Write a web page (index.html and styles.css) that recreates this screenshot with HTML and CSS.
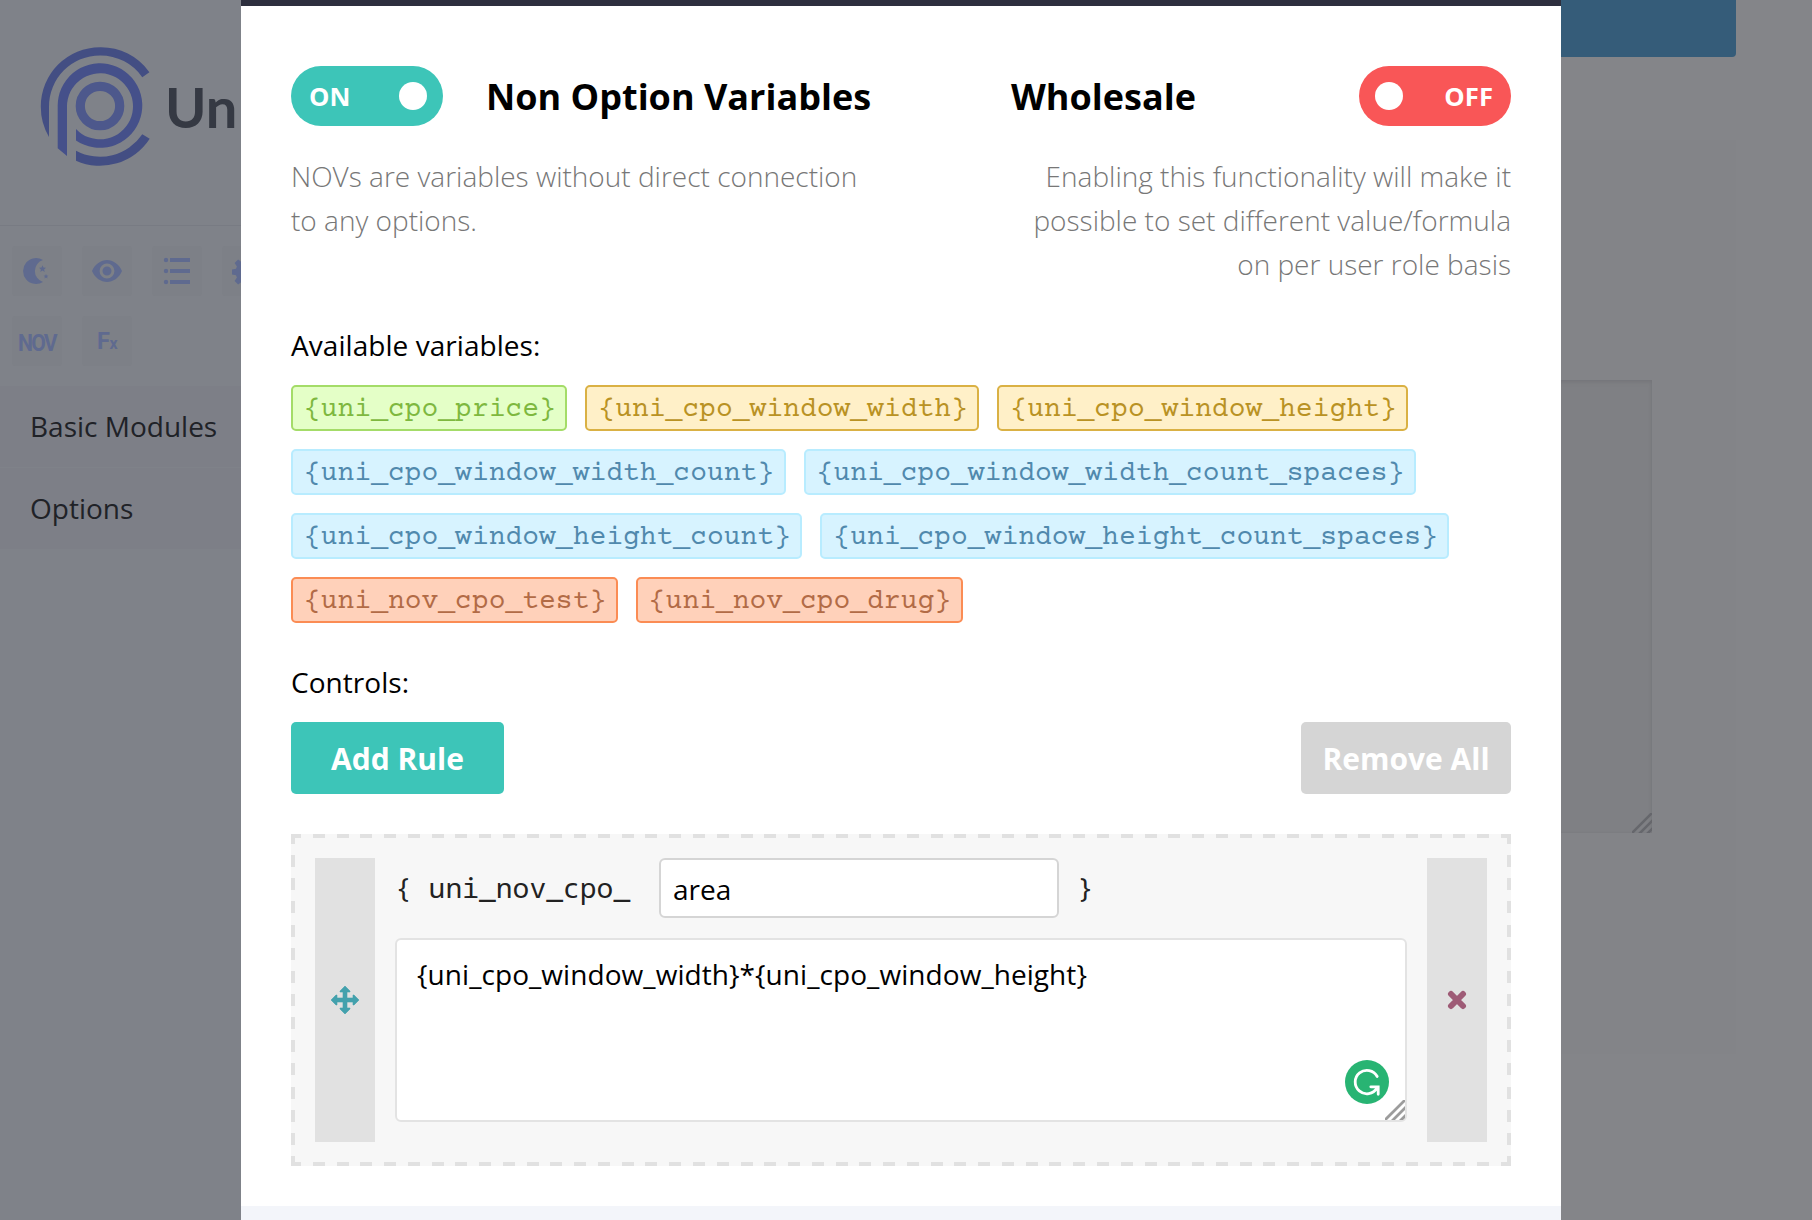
FILE: index.html
```html
<!DOCTYPE html>
<html lang="en">
<head>
<meta charset="utf-8">
<title>Non Option Variables</title>
<link rel="stylesheet" href="styles.css">
</head>
<body>
<div class="app">
  <aside class="sidebar">
    <div class="brand">
      <svg class="brand-mark" width="120" height="120" viewBox="40 46 120 120">
        <g fill="#45508a">
          <path fill="#434e83" d="M149.4 72.2A59.3 59.3 0 0 0 100 47.2A59.3 59.3 0 0 0 40.8 106.5A59.3 59.3 0 0 0 49 137V106.5A51 51 0 0 1 100 55.4A51 51 0 0 1 142.3 77.2Z"/>
          <path fill="#434e83" d="M76 150.7A51 51 0 0 0 142.3 134.2L149.7 138.8A59.2 59.2 0 0 1 76 160.7Z"/>
          <path d="M57.7 106.5V148.3L67 156V106.5A33 33 0 1 1 76 129V140.4A42.3 42.3 0 1 0 57.7 106.5Z"/>
        </g>
        <circle cx="100" cy="106" r="19.7" fill="none" stroke="#4d588c" stroke-width="9.2"/>
      </svg>
      <span class="brand-name">Un</span>
    </div>
    <div class="tools">
      <span class="tool"><svg width="30" height="30" viewBox="0 0 30 30"><path d="M21 4A13 13 0 1 0 21 26A11.5 11.5 0 0 1 21 4Z"/><path d="M20.5 9.2l1 2.3 2.500.2-1.900 1.700.6 2.500-2.200-1.300-2.200 1.300.6-2.500-1.900-1.700 2.500-.2zM24 18l.7 1.500 1.700.2-1.300 1.100.4 1.700-1.500-.9-1.500.9.4-1.700-1.300-1.100 1.700-.2z"/></svg></span>
      <span class="tool"><svg width="30" height="30" viewBox="0 0 30 30"><path fill-rule="evenodd" d="M0 15C3 8 9 4 15 4S27 8 30 15C27 22 21 26 15 26S3 22 0 15ZM15 7.600a7.400 7.400 0 1 0 0 14.800a7.400 7.400 0 1 0 0-14.800ZM15 10.500a4.500 4.500 0 1 1 0 9a4.500 4.500 0 1 1 0-9Z"/></svg></span>
      <span class="tool"><svg width="30" height="30" viewBox="0 0 30 30"><path d="M8 2H28V6H8ZM8 13H28V17H8ZM8 24H28V28H8Z"/><circle cx="4" cy="4" r="2.200"/><circle cx="4" cy="15" r="2.200"/><circle cx="4" cy="26" r="2.200"/></svg></span>
      <span class="tool"><svg width="30" height="30" viewBox="0 0 30 30"><path fill-rule="evenodd" d="M12.500 1h5l.8 4 2.200.9 3.400-2.300 3.500 3.500-2.300 3.400.9 2.200 4 .8v5l-4 .8-.9 2.200 2.300 3.400-3.500 3.500-3.400-2.300-2.200.9-.8 4h-5l-.8-4-2.200-.9-3.400 2.300-3.500-3.500 2.300-3.400-.9-2.200-4-.8v-5l4-.8.9-2.200-2.300-3.400 3.500-3.500 3.400 2.300 2.200-.9zM15 10a5 5 0 1 0 0 10a5 5 0 1 0 0-10Z"/></svg></span>
      <span class="tool"><b class="tool-nov">NOV</b></span>
      <span class="tool"><b class="tool-fx">F<small>x</small></b></span>
    </div>
    <nav class="sections">
      <div class="section">Basic Modules</div>
      <div class="section">Options</div>
    </nav>
  </aside>
  <main class="canvas">
    <div class="bar"></div>
    <div class="card">
      <div class="field"><svg class="field-grip" width="20" height="20" viewBox="0 0 20 20"><path d="M-1 21L21 -1M7 21L21 7M15 21L21 15"/></svg></div>
    </div>
  </main>
</div>

<div class="modal">
  <div class="modal-head"></div>
  <div class="modal-body">
    <div class="settings">
      <section class="setting">
        <div class="setting-top">
          <span class="toggle toggle-on">ON<i class="knob"></i></span>
          <h2>Non Option Variables</h2>
        </div>
        <p class="desc">NOVs are variables without direct connection to any options.</p>
      </section>
      <section class="setting setting-right">
        <div class="setting-top">
          <h2>Wholesale</h2>
          <span class="toggle toggle-off"><i class="knob"></i>OFF</span>
        </div>
        <p class="desc">Enabling this functionality will make it possible to set different value/formula on&nbsp;per user role basis</p>
      </section>
    </div>

    <div class="label">Available variables:</div>
    <div class="tags">
      <div class="tag-row"><code class="tag green">{uni_cpo_price}</code><code class="tag yellow">{uni_cpo_window_width}</code><code class="tag yellow">{uni_cpo_window_height}</code></div>
      <div class="tag-row"><code class="tag blue">{uni_cpo_window_width_count}</code><code class="tag blue">{uni_cpo_window_width_count_spaces}</code></div>
      <div class="tag-row"><code class="tag blue">{uni_cpo_window_height_count}</code><code class="tag blue">{uni_cpo_window_height_count_spaces}</code></div>
      <div class="tag-row"><code class="tag orange">{uni_nov_cpo_test}</code><code class="tag orange">{uni_nov_cpo_drug}</code></div>
    </div>

    <div class="label label-controls">Controls:</div>
    <div class="controls">
      <div class="btn btn-add">Add Rule</div>
      <div class="btn btn-remove">Remove All</div>
    </div>

    <div class="rule">
      <div class="rule-side">
        <svg width="28" height="28" viewBox="0 0 28 28" fill="#43a1ad"><path d="M14 0L19 5V6H16V12H22V9H23L28 14L23 19H22V16H16V22H19V23L14 28L9 23V22H12V16H6V19H5L0 14L5 9H6V12H12V6H9V5Z" stroke="#43a1ad" stroke-width=".6" stroke-linejoin="round"/></svg>
      </div>
      <div class="rule-main">
        <div class="rule-name">
          <span class="mono">{ uni_nov_cpo_</span>
          <div class="input">area</div>
          <span class="mono">}</span>
        </div>
        <div class="formula">{uni_cpo_window_width}*{uni_cpo_window_height}
          <svg class="checker" width="44" height="44" viewBox="0 0 44 44"><circle cx="22" cy="22" r="22" fill="#28b473"/><path d="M32.200 16.500A11.700 11.700 0 1 0 32 28L33 27M25.800 26.800H33.200V34.300" fill="none" stroke="#fff" stroke-width="2.800" stroke-linecap="round"/></svg>
          <svg class="grip" width="20" height="20" viewBox="0 0 20 20"><path d="M-1 21L21 -1M7 21L21 7M15 21L21 15"/></svg>
        </div>
      </div>
      <div class="rule-side rule-remove">
        <svg width="20" height="20" viewBox="0 0 20 20"><path d="M4 4L16 16M16 4L4 16" stroke="#9e5b76" stroke-width="6" stroke-linecap="round"/></svg>
      </div>
    </div>
  </div>
  <div class="modal-foot"></div>
</div>
</body>
</html>
```
FILE: styles.css
```css
* { box-sizing: border-box; }
body {
  margin: 0;
  width: 1812px;
  height: 1220px;
  overflow: hidden;
  position: relative;
  background: #848589;
  font-family: "Open Sans", "Noto Sans", sans-serif;
  font-size: 28px;
  color: #000;
}

/* dimmed page behind the dialog */
.app { display: flex; height: 1220px; }
.sidebar { width: 260px; background: #7f8289; overflow: hidden; }
.brand {
  height: 226px;
  padding: 46px 0 0 40px;
  display: flex;
  border-bottom: 1px solid #787b83;
}
.brand-mark { flex: none; }
.brand-name {
  margin: 29px 0 0 5px;
  font: 700 56px/64px Lato, sans-serif;
  color: #353943;
}
.tools {
  display: grid;
  grid-template-columns: repeat(4, 50px);
  grid-auto-rows: 50px;
  gap: 20px;
  padding: 20px 0 20px 12px;
}
.tool {
  display: flex;
  align-items: center;
  justify-content: center;
  border-radius: 3px;
  background: #7d8087;
  color: #5f6a8f;
}
.tool svg { fill: #5f6a8f; }
.tool-nov, .tool-fx { font: 700 23.5px/50px Roboto, sans-serif; padding-top: 3px; }
.tool-nov { letter-spacing: -2px; transform: scaleX(.9); }
.tool-fx { letter-spacing: -.5px; }
.tool-fx small { font-size: 16px; }
.section {
  height: 81px;
  margin-bottom: 1px;
  padding-left: 30px;
  line-height: 81px;
  background: #7d7f87;
  color: #202227;
}
.canvas { flex: 1; padding-right: 76px; }
.bar { height: 57px; border-radius: 0 0 4px 0; background: #355c79; }
.card {
  height: 914px;
  margin-top: 83px;
  padding: 240px 84px 0 0;
  background: #838488;
}
.field {
  height: 453px;
  background: #7f8084;
  box-shadow: inset 0 3px 4px -1px #75767a, inset -1px 0 2px #797a7e;
  display: flex;
  align-items: flex-end;
  justify-content: flex-end;
}
.field-grip path { stroke: #66676c; stroke-width: 2.6; }

/* dialog */
.modal {
  position: absolute;
  left: 241px;
  top: 0;
  width: 1320px;
  height: 1220px;
  display: flex;
  flex-direction: column;
  background: #fff;
}
.modal-head { height: 6px; background: #2d2f3e; }
.modal-body { height: 1200px; padding: 60px 50px 0; }
.modal-foot { height: 14px; background: #f3f5fa; }

.settings { display: flex; justify-content: space-between; height: 220px; }
.setting { width: 590px; }
.setting-right { width: 500px; text-align: right; }
.setting-top { display: flex; align-items: center; gap: 43px; height: 60px; }
.setting-right .setting-top { justify-content: space-between; }
h2 { margin: 0; padding-top: 2px; font-size: 36px; line-height: 60px; font-weight: 700; white-space: nowrap; }
.toggle {
  width: 152px;
  height: 60px;
  padding: 0 16px 0 18px;
  border-radius: 30px;
  display: flex;
  align-items: center;
  justify-content: space-between;
  color: #fff;
  font-size: 25.7px;
  font-weight: 700;
}
.toggle-on { background: #3dc5b8; }
.toggle-off { background: #f95657; padding: 0 18px 0 16px; }
.knob { width: 28px; height: 28px; border-radius: 50%; background: #fff; }
.desc { margin: 28px 0 0; font-weight: 300; line-height: 44px; color: #777; }

.label { margin-top: 40px; line-height: 38px; letter-spacing: .05px; }
.tags { margin-top: 21px; display: flex; flex-direction: column; gap: 18px; }
.tag-row { display: flex; gap: 18px; }
.tag {
  height: 46px;
  padding: 0 9.6px 0 11px;
  border: 2px solid;
  border-radius: 5px;
  font: 28px/46px "Courier Prime", Courier, "Courier New", "Liberation Mono", monospace;
}
.green { background: #e4ffc7; border-color: #a4dc68; color: #7eb83f; }
.yellow { background: #fff0c8; border-color: #dab144; color: #b99224; }
.blue { background: #d7f3ff; border-color: #b8ecff; color: #5089ad; }
.orange { background: #ffd1ba; border-color: #fb8c54; color: #b26b46; }

.label-controls { margin-top: 40px; }
.controls { display: flex; justify-content: space-between; margin-top: 21px; }
.btn {
  height: 72px;
  line-height: 74px;
  border-radius: 5px;
  text-align: center;
  color: #fff;
  font-size: 30px;
  font-weight: 700;
}
.btn-add { width: 213px; background: #3dc5b8; }
.btn-remove { width: 210px; background: #d5d5d5; }

/* 12px dashes, drawn as gradients so that the corners stay solid */
.rule {
  --dash-x: repeating-linear-gradient(90deg, #e1e1e1 0 10px, transparent 10px 21.765px, #e1e1e1 21.765px 23.765px);
  --dash-y: repeating-linear-gradient(180deg, #e1e1e1 0 10px, transparent 10px 21.143px, #e1e1e1 21.143px 23.143px);
  display: flex;
  gap: 20px;
  height: 332px;
  margin-top: 40px;
  padding: 24px;
  background:
    var(--dash-x) 0 0 / 100% 4px no-repeat,
    var(--dash-x) 0 100% / 100% 4px no-repeat,
    var(--dash-y) 0 0 / 4px 100% no-repeat,
    var(--dash-y) 100% 0 / 4px 100% no-repeat,
    #f7f7f7;
}
.rule-side {
  width: 60px;
  display: flex;
  align-items: center;
  justify-content: center;
  background: #e1e1e1;
}
.rule-main { flex: 1; display: flex; flex-direction: column; gap: 20px; padding-bottom: 20px; }
.rule-name { display: flex; height: 60px; }
.mono {
  width: 264px;
  font: 28px/58px "Noto Sans Mono", "DejaVu Sans Mono", monospace;
  color: #222;
  white-space: pre;
}
.mono:last-child { width: auto; margin-left: 18px; }
.input {
  width: 400px;
  padding-left: 12px;
  border: 2px solid #d5d5d5;
  border-radius: 6px;
  background: #fff;
  line-height: 58px;
}
.formula {
  position: relative;
  flex: 1;
  padding: 12px 20px;
  border: 2px solid #e3e3e3;
  border-radius: 6px;
  background: #fff;
  line-height: 44px;
  letter-spacing: .06px;
}
.checker { position: absolute; right: 16px; bottom: 16px; }
.grip { position: absolute; right: 0; bottom: 0; }
.grip path { stroke: #9c9c9c; stroke-width: 2.8; }
```
